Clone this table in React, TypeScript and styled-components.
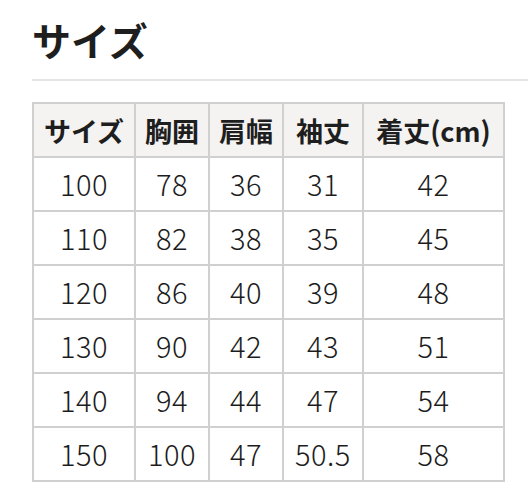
import styled, { createGlobalStyle } from 'styled-components';

const GlobalStyle = createGlobalStyle`
  body {
    margin: 0;
    background: #fff;
    font-family: "Noto Sans CJK JP", "Noto Sans", sans-serif;
    color: #222;
  }
`;

const Page = styled.section`
  padding: 11px 0 0 32px;
`;

const Title = styled.h2`
  margin: 0;
  font-size: 39px;
  font-weight: 700;
  line-height: 56px;
  color: #1e1e1e;
`;

const Rule = styled.hr`
  margin: 12px 0 21px;
  border: none;
  border-top: 2px solid #e4e4e4;
`;

const Table = styled.table`
  border-collapse: collapse;
  table-layout: fixed;
  width: 473px;
  border: 2px solid #d0d0d0;
`;

const Th = styled.th`
  height: 52px;
  padding: 0;
  border: 2px solid #d0d0d0;
  background: #f4f3f2;
  font-size: 27px;
  font-weight: 700;
  color: #1e1e1e;
  text-align: center;
  white-space: nowrap;
`;

const Td = styled.td`
  height: 49px;
  padding: 0 0 3px;
  border: 2px solid #d0d0d0;
  font-size: 29px;
  font-weight: 300;
  letter-spacing: 0.5px;
  color: #1c1c1c;
  text-align: center;
`;

const columns = [
  { label: 'サイズ', width: 102 },
  { label: '胸囲', width: 74 },
  { label: '肩幅', width: 74 },
  { label: '袖丈', width: 80 },
  { label: '着丈(cm)', width: 141 },
];

const rows = [
  ['100', '78', '36', '31', '42'],
  ['110', '82', '38', '35', '45'],
  ['120', '86', '40', '39', '48'],
  ['130', '90', '42', '43', '51'],
  ['140', '94', '44', '47', '54'],
  ['150', '100', '47', '50.5', '58'],
];

export default function App() {
  return (
    <>
      <GlobalStyle />
      <Page>
        <Title>サイズ</Title>
        <Rule />
        <Table>
          <colgroup>
            {columns.map(col => (
              <col key={col.label} style={{ width: col.width }} />
            ))}
          </colgroup>
          <thead>
            <tr>
              {columns.map(col => (
                <Th key={col.label}>{col.label}</Th>
              ))}
            </tr>
          </thead>
          <tbody>
            {rows.map(row => (
              <tr key={row[0]}>
                {row.map((value, i) => (
                  <Td key={i}>{value}</Td>
                ))}
              </tr>
            ))}
          </tbody>
        </Table>
      </Page>
    </>
  );
}
